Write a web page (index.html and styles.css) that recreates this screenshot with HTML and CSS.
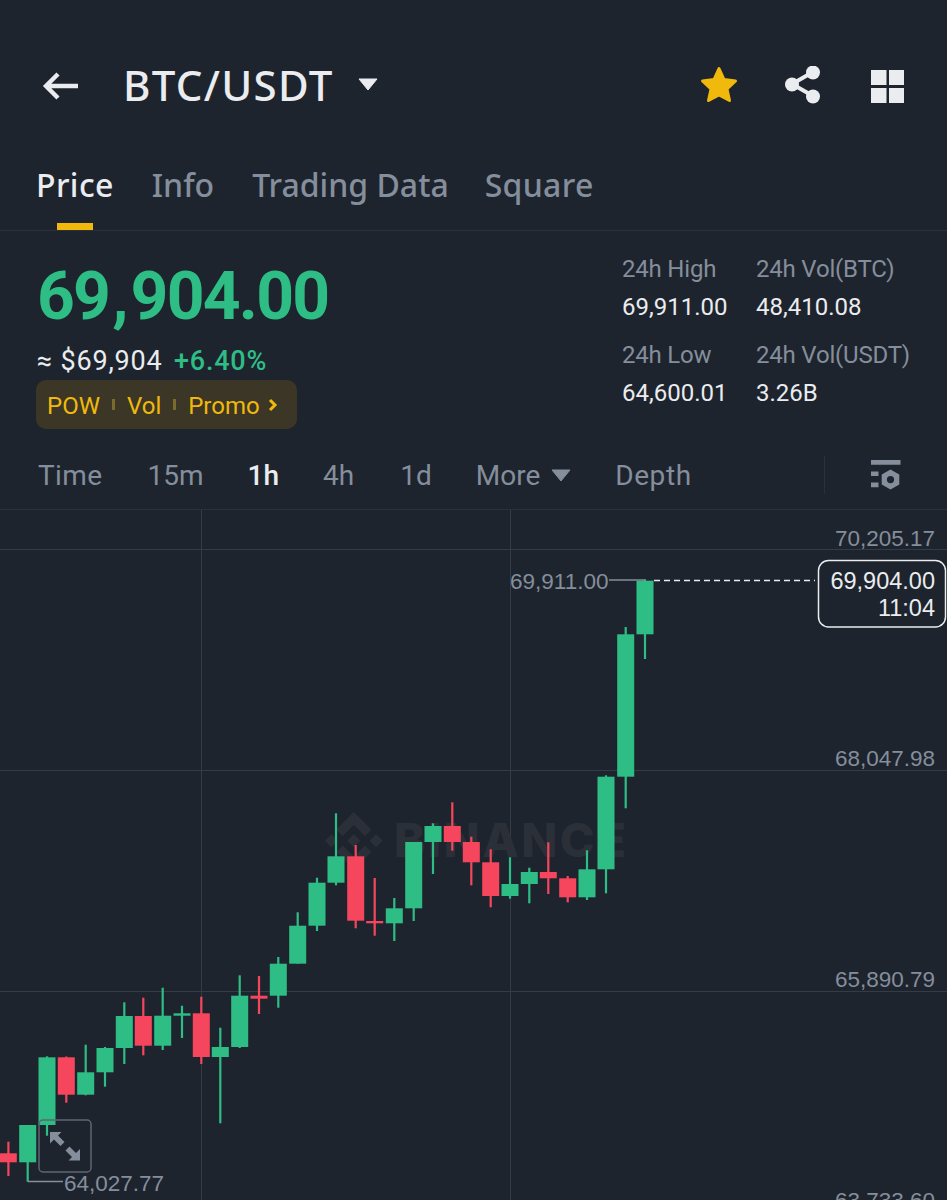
FILE: index.html
```html
<!DOCTYPE html>
<html lang="en">
<head>
  <meta charset="UTF-8">
  <title>BTC/USDT</title>
  <meta name="viewport" content="width=device-width, initial-scale=1">
  <link rel="stylesheet" href="styles.css">
</head>
<body>

  <header class="topbar">
    <svg class="back" width="38" height="30" viewBox="0 0 38 30">
      <path d="M36 15H4M16 3 4 15l12 12" fill="none" stroke="#eaecef" stroke-width="4.4"/>
    </svg>
    <h1 class="pair">BTC/USDT</h1>
    <svg class="caret" width="20" height="13" viewBox="0 0 20 13">
      <path d="M1 1h18l-9 11z" fill="#eaecef" stroke="#eaecef" stroke-linejoin="round"/>
    </svg>
    <div class="actions">
      <svg width="38" height="38" viewBox="0 0 38 38">
        <path d="M19 2.500 24 13.500 35.500 15 27 23 29.500 34.500 19 29 8.500 34.500 11 23 2.500 15 14 13.500z" fill="#f0b90b" stroke="#f0b90b" stroke-width="3" stroke-linejoin="round"/>
      </svg>
      <svg width="36" height="38" viewBox="0 0 36 38">
        <path d="M28 6 7 18 28 30" fill="none" stroke="#eaecef" stroke-width="4"/>
        <circle cx="28" cy="6.500" r="7" fill="#eaecef"/>
        <circle cx="7" cy="18.500" r="7" fill="#eaecef"/>
        <circle cx="28" cy="30.500" r="7" fill="#eaecef"/>
      </svg>
      <svg class="apps" width="33" height="33" viewBox="0 0 33 33">
        <rect width="15.500" height="15" fill="#eaecef"/>
        <rect x="18" width="15" height="15" fill="#eaecef"/>
        <rect y="18" width="15.500" height="15" fill="#eaecef"/>
        <rect x="18" y="18" width="15" height="15" fill="#eaecef"/>
      </svg>
    </div>
  </header>

  <nav class="tabs">
    <a class="tab active">Price</a>
    <a class="tab">Info</a>
    <a class="tab">Trading Data</a>
    <a class="tab">Square</a>
  </nav>

  <section class="summary">
    <div class="quote">
      <div class="last-price">69<span class="comma">,</span>904.00</div>
      <div class="fiat">≈ $69,904 <span class="change">+6.40%</span></div>
      <div class="tags">
        <span>POW</span><i></i><span>Vol</span><i></i><span>Promo</span>
        <svg width="10" height="14" viewBox="0 0 10 14">
          <path d="M2 2l5 5-5 5" fill="none" stroke="#f0b90b" stroke-width="3"/>
        </svg>
      </div>
    </div>
    <div class="stats">
      <div><label>24h High</label><b>69,911.00</b></div>
      <div><label>24h Vol(BTC)</label><b>48,410.08</b></div>
      <div><label>24h Low</label><b>64,600.01</b></div>
      <div><label>24h Vol(USDT)</label><b>3.26B</b></div>
    </div>
  </section>

  <div class="intervals">
    <a class="time">Time</a>
    <a class="m15">15m</a>
    <a class="h1 on">1h</a>
    <a class="h4">4h</a>
    <a class="d1">1d</a>
    <a class="more">More
      <svg width="20" height="13" viewBox="0 0 20 13"><path d="M1 1h18l-9 11z" fill="#848e9c" stroke="#848e9c" stroke-linejoin="round"/></svg>
    </a>
    <a class="depth">Depth</a>
    <div class="tools">
      <svg width="30" height="30" viewBox="0 0 30 30">
        <path d="M0 0h29.500v4.700H0zM0 11.500h7.500v4.400H0zM0 22.500h7.500v4.700H0z" fill="#848e9c"/>
        <path fill-rule="evenodd" d="M19.500 9.500l8.800 5v10l-8.800 5-8.800-5v-10zm0 6.500a3.600 3.600 0 1 0 0 7.200 3.600 3.600 0 0 0 0-7.200z" fill="#848e9c"/>
      </svg>
    </div>
  </div>

  <div class="chart">
    <svg width="947" height="690" viewBox="0 510 947 690">
      <!-- grid -->
      <g class="grid">
        <path d="M0 549.500H947M0 770.500H947M0 991.500H947M201.500 510V1200M510.500 510V1200"/>
      </g>

      <!-- watermark -->
      <path class="mark" transform="translate(325 812) scale(1.8)" d="M9.800 13.400 16 7.200l6.200 6.200 3.600-3.600L16 0 6.200 9.800zM0 16l3.600-3.600L7.200 16l-3.600 3.600zm9.800 2.600L16 24.800l6.200-6.200 3.600 3.600L16 32l-9.800-9.800zM24.800 16l3.600-3.600L32 16l-3.600 3.600zM19.600 16 16 12.400 12.400 16 16 19.600z"/>
      <text class="mark-text" x="394" y="857">BINANCE</text>

      <!-- candles: wick, then body -->
      <g class="down">
        <rect x="7.300" y="1141.700" width="2.200" height="34.300"/><rect x="-0.200" y="1153.300" width="17" height="9"/>
        <rect x="65.200" y="1056.500" width="2.200" height="46.200"/><rect x="57.800" y="1057.300" width="17" height="37.400"/>
        <rect x="142.200" y="997.700" width="2.200" height="57.600"/><rect x="134.800" y="1016" width="17" height="29.700"/>
        <rect x="200.200" y="996.700" width="2.200" height="67.300"/><rect x="192.800" y="1013.300" width="17" height="43.700"/>
        <rect x="257.900" y="976" width="2.200" height="38"/><rect x="250.500" y="995.700" width="17" height="3"/>
        <rect x="354.600" y="845" width="2.200" height="83.300"/><rect x="347.200" y="856.300" width="17" height="64.400"/>
        <rect x="373.600" y="878" width="2.200" height="57.700"/><rect x="366.200" y="921" width="17" height="2.300"/>
        <rect x="451.200" y="802.300" width="2.200" height="48.400"/><rect x="443.800" y="826" width="17" height="16"/>
        <rect x="470.200" y="836.700" width="2.200" height="48.600"/><rect x="462.800" y="842" width="17" height="20.300"/>
        <rect x="489.600" y="849.300" width="2.200" height="58"/><rect x="482.200" y="862.300" width="17" height="33.700"/>
        <rect x="547.200" y="842.300" width="2.200" height="51.700"/><rect x="539.800" y="872" width="17" height="6.300"/>
        <rect x="566.600" y="876" width="2.200" height="26.300"/><rect x="559.200" y="878.300" width="17" height="19"/>
      </g>
      <g class="up">
        <rect x="26.600" y="1125" width="2.200" height="56.700"/><rect x="19.200" y="1125" width="17" height="37.300"/>
        <rect x="45.900" y="1056.300" width="2.200" height="79.400"/><rect x="38.500" y="1057.300" width="17" height="67.700"/>
        <rect x="84.600" y="1044.700" width="2.200" height="50.600"/><rect x="77.200" y="1072.300" width="17" height="22.400"/>
        <rect x="103.900" y="1047" width="2.200" height="39.700"/><rect x="96.500" y="1048" width="17" height="24.300"/>
        <rect x="123.200" y="1002.300" width="2.200" height="61.700"/><rect x="115.800" y="1016" width="17" height="32"/>
        <rect x="161.600" y="987.700" width="2.200" height="62.300"/><rect x="154.200" y="1015.700" width="17" height="30"/>
        <rect x="180.900" y="1005.700" width="2.200" height="32.300"/><rect x="173.500" y="1013.300" width="17" height="2.400"/>
        <rect x="219.200" y="1027.700" width="2.200" height="95.600"/><rect x="211.800" y="1047" width="17" height="10"/>
        <rect x="238.600" y="975.300" width="2.200" height="72.700"/><rect x="231.200" y="995.700" width="17" height="51.300"/>
        <rect x="277.200" y="957" width="2.200" height="50.700"/><rect x="269.800" y="963.700" width="17" height="32"/>
        <rect x="296.600" y="912.300" width="2.200" height="51.400"/><rect x="289.200" y="925.700" width="17" height="38"/>
        <rect x="315.900" y="877.700" width="2.200" height="53.300"/><rect x="308.500" y="882.700" width="17" height="43"/>
        <rect x="334.900" y="813.300" width="2.200" height="72"/><rect x="327.500" y="856.300" width="17" height="26.400"/>
        <rect x="393.200" y="898" width="2.200" height="43"/><rect x="385.800" y="908.300" width="17" height="15"/>
        <rect x="412.600" y="842" width="2.200" height="79"/><rect x="405.200" y="842" width="17" height="66.300"/>
        <rect x="431.900" y="823.300" width="2.200" height="50.700"/><rect x="424.500" y="826" width="17" height="16"/>
        <rect x="508.900" y="857.300" width="2.200" height="41.400"/><rect x="501.500" y="884" width="17" height="12"/>
        <rect x="528.200" y="867.700" width="2.200" height="35.600"/><rect x="520.800" y="872" width="17" height="12"/>
        <rect x="585.900" y="850.300" width="2.200" height="49.700"/><rect x="578.500" y="869.300" width="17" height="28"/>
        <rect x="604.900" y="775.300" width="2.200" height="118"/><rect x="597.500" y="776.700" width="17" height="92.600"/>
        <rect x="624.600" y="627" width="2.200" height="181.300"/><rect x="617.200" y="634.300" width="17" height="142.400"/>
        <rect x="643.900" y="579.300" width="2.200" height="79.700"/><rect x="636.500" y="580.700" width="17" height="53.600"/>
      </g>

      <!-- high / low markers -->
      <path class="marker" d="M609 580H645M27.700 1181.500H63"/>
      <text class="axis" x="510" y="589">69,911.00</text>
      <text class="axis" x="64" y="1191">64,027.77</text>

      <!-- price axis -->
      <text class="axis end" x="935" y="546">70,205.17</text>
      <text class="axis end" x="935" y="766">68,047.98</text>
      <text class="axis end" x="935" y="987">65,890.79</text>
      <text class="axis end" x="935" y="1208">63,733.60</text>

      <!-- current price -->
      <path class="last-line" d="M654 580.500H815"/>
      <rect class="last-box" x="818.500" y="560.500" width="127" height="66.500" rx="10"/>
      <text class="last-text" x="935" y="589">69,904.00</text>
      <text class="last-text" x="935" y="616">11:04</text>

      <!-- fullscreen button -->
      <rect class="expand-box" x="39" y="1120" width="52" height="52" rx="4"/>
      <path class="expand" d="M50 1132h11.500l-3.500 3.500 6.500 6.500-4 4-6.500-6.500-4 4zM80 1160.500h-11.500l3.500-3.500-6.500-6.500 4-4 6.500 6.500 4-4z"/>
    </svg>
  </div>

</body>
</html>
```

FILE: styles.css
```css
body {
  margin: 0;
  width: 947px;
  height: 1200px;
  overflow: hidden;
  background: #1e242d;
  color: #eaecef;
  font-family: "Noto Sans", Arial, sans-serif;
}

.topbar {
  display: flex;
  align-items: center;
  height: 54px;
  padding: 58px 43px 0 42px;
}

.back {
  flex: none;
  margin-top: 2px;
}

.pair {
  margin: 0 0 0 43px;
  font-size: 42px;
  font-weight: 500;
  line-height: 54px;
  letter-spacing: 1.3px;
}

.caret {
  margin-left: 24px;
  margin-bottom: 2px;
}

.actions {
  display: flex;
  align-items: center;
  gap: 47px;
  margin-left: auto;
}

.apps {
  margin-left: 3px;
  margin-top: 3px;
}

.tabs {
  display: flex;
  gap: 38px;
  height: 73px;
  padding: 45px 0 0 36px;
  border-bottom: 1px solid #2b3139;
}

.tab {
  position: relative;
  color: #848e9c;
  font-size: 32px;
  font-weight: 500;
  line-height: 56px;
}

.tab:last-child {
  margin-left: -2px;
  letter-spacing: 0.3px;
}

.tab.active {
  color: #eaecef;
  letter-spacing: 0.4px;
}

.tab.active::after {
  content: "";
  position: absolute;
  left: 21px;
  top: 66px;
  width: 36px;
  height: 7px;
  background: #f0b90b;
}

.summary {
  display: flex;
  justify-content: space-between;
  height: 224px;
}

.quote {
  padding: 26px 0 0 37px;
}

.last-price {
  color: #2ebd85;
  font-family: Roboto, Arial, sans-serif;
  font-size: 66px;
  font-weight: 700;
  line-height: 80px;
  letter-spacing: -1.800px;
}

.comma {
  margin: 0 4px 0 3px;
}

.fiat {
  margin-top: 8px;
  font-family: Roboto, Arial, sans-serif;
  font-size: 27px;
  line-height: 32px;
  letter-spacing: 0.8px;
}

.change {
  margin-left: 4px;
  color: #2ebd85;
  font-weight: 500;
}

.tags {
  display: flex;
  align-items: center;
  width: 261px;
  height: 49px;
  margin: 3px 0 0 -1px;
  padding-left: 11px;
  box-sizing: border-box;
  border-radius: 10px;
  background: #3c3627;
  color: #f0b90b;
  font-size: 24px;
}

.tags span {
  position: relative;
  top: 1px;
  font-family: Roboto, Arial, sans-serif;
}

.tags i {
  width: 3px;
  height: 11px;
  margin: 0 12px;
  background: #7c6a2a;
}

.tags svg {
  margin-left: 8px;
}

.stats {
  display: grid;
  grid-template-columns: 134px 191px;
  align-content: start;
  row-gap: 10px;
  padding-top: 21px;
  font-family: Roboto, Arial, sans-serif;
  font-size: 24px;
}

.stats label {
  display: block;
  color: #848e9c;
  line-height: 34px;
  letter-spacing: -0.2px;
}

.stats b {
  display: block;
  font-weight: 400;
  line-height: 42px;
}

.intervals {
  display: flex;
  align-items: center;
  height: 40px;
  padding-bottom: 14px;
  border-bottom: 1px solid #2b3139;
  color: #848e9c;
  font-family: Roboto, Arial, sans-serif;
  font-size: 28px;
}

.intervals a {
  flex: none;
}

.time { margin-left: 38px; letter-spacing: 0.4px; }
.m15 { margin-left: 45px; }
.h1 { margin-left: 44px; }
.h4 { margin-left: 44px; }
.d1 { margin-left: 46px; }
.more { margin-left: 44px; }
.depth { margin-left: 44px; letter-spacing: 0.6px; }

.on {
  color: #eaecef;
  font-weight: 500;
}

.more svg {
  margin-left: 4px;
  vertical-align: 3px;
}

.tools {
  display: flex;
  align-items: center;
  height: 38px;
  margin-left: auto;
  margin-right: 46px;
  padding-left: 46px;
  border-left: 1px solid #2b3139;
}

.chart svg {
  display: block;
}

.grid path {
  fill: none;
  stroke: #363c45;
  stroke-width: 1;
}

.mark {
  fill: #2b3038;
}

.mark-text {
  fill: #2b3038;
  font-family: Inter, Arial, sans-serif;
  font-size: 47px;
  font-weight: 800;
  letter-spacing: 2.600px;
}

.up rect {
  fill: #2ebd85;
}

.down rect {
  fill: #f6465d;
}

.marker {
  fill: none;
  stroke: #848e9c;
  stroke-width: 1.500;
}

.axis {
  fill: #848e9c;
  font-family: "Liberation Sans", Arial, sans-serif;
  font-size: 22.500px;
}

.end {
  text-anchor: end;
}

.last-line {
  fill: none;
  stroke: #eaecef;
  stroke-width: 1.500;
  stroke-dasharray: 6 4;
}

.last-box {
  fill: #1e242d;
  stroke: #eaecef;
  stroke-width: 1.500;
}

.last-text {
  fill: #eaecef;
  font-family: "Liberation Sans", Arial, sans-serif;
  font-size: 23.500px;
  text-anchor: end;
}

.expand-box {
  fill: none;
  stroke: #5e6673;
  stroke-width: 1.500;
}

.expand {
  fill: #848e9c;
}
```
